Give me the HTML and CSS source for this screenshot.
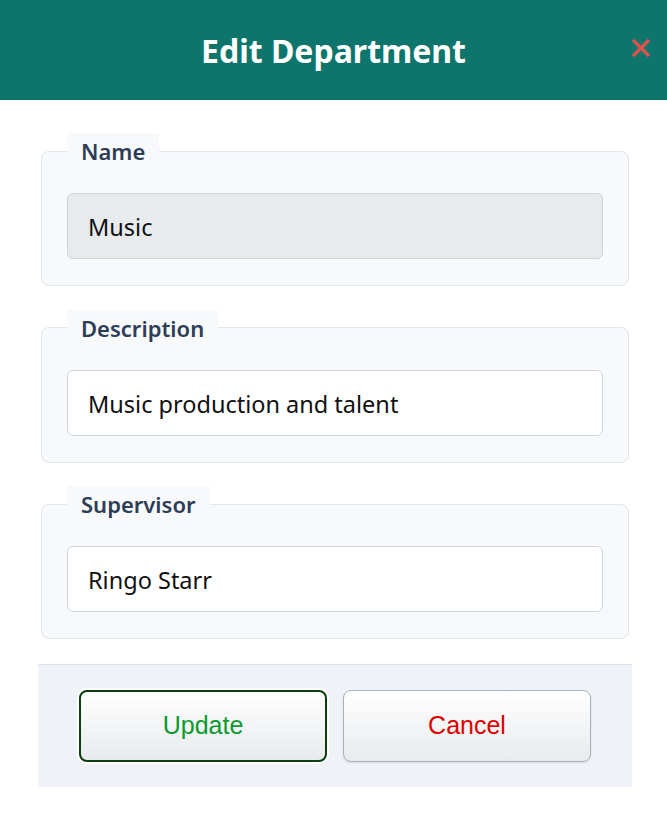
FILE: index.html
```html
<!DOCTYPE html>
<html lang="en">
<head>
<meta charset="utf-8">
<title>Edit Department</title>
<link rel="stylesheet" href="styles.css">
</head>
<body>
<div class="modal">
  <header class="modal-header">
    <h1 class="modal-title">Edit Department</h1>
    <button class="close-btn" type="button" aria-label="Close">
      <svg width="20" height="20" viewBox="0 0 20 20"><path d="M2 2 L18 18 M18 2 L2 18" stroke="#d9534f" stroke-width="3.4" stroke-linecap="butt"/></svg>
    </button>
  </header>
  <form class="modal-body">
    <fieldset class="group">
      <legend class="group-label">Name</legend>
      <input class="field field-disabled" type="text" value="Music" disabled>
    </fieldset>
    <fieldset class="group">
      <legend class="group-label">Description</legend>
      <input class="field" type="text" value="Music production and talent">
    </fieldset>
    <fieldset class="group">
      <legend class="group-label">Supervisor</legend>
      <input class="field" type="text" value="Ringo Starr">
    </fieldset>
  </form>
  <footer class="modal-footer">
    <button class="btn btn-update" type="button">Update</button>
    <button class="btn btn-cancel" type="button">Cancel</button>
  </footer>
</div>
</body>
</html>
```
FILE: styles.css
```css
* { box-sizing: border-box; }
html, body { margin: 0; padding: 0; background: #ffffff; }
body { font-family: "Noto Sans", "Open Sans", sans-serif; }

.modal { width: 667px; min-height: 816px; background: #fff; }

.modal-header {
  position: relative;
  height: 100px;
  background: #0e756d;
  display: flex;
  align-items: center;
  justify-content: center;
}
.modal-title {
  margin: 0;
  color: #ffffff;
  font-size: 32px;
  font-weight: 700;
  line-height: 1;
  padding-top: 1px;
}
.close-btn {
  position: absolute;
  right: 15px;
  top: 37px;
  width: 22px;
  height: 22px;
  padding: 0;
  border: 0;
  background: transparent;
  display: flex;
  align-items: center;
  justify-content: center;
}

.modal-body {
  padding: 33px 38px 0 41px;
  display: flex;
  flex-direction: column;
  gap: 23.5px;
}
.group {
  margin: 0;
  width: 588px;
  border: 1px solid #e2e6ee;
  border-radius: 8px;
  background: #f8f9fb;
  padding: 24px 25px 26px 25px;
}
.group-label {
  background: #f8f9fb;
  color: #2d3e56;
  font-size: 22px;
  font-weight: 600;
  line-height: 24px;
  padding: 6px 14px;
  margin-left: 0;
}
.field {
  display: block;
  width: 536px;
  height: 66px;
  border: 1px solid #cdd4de;
  border-radius: 6px;
  background: #ffffff;
  padding: 2px 20px 0 20px;
  font-family: "Noto Sans", "Open Sans", sans-serif;
  font-size: 23.5px;
  color: #111111;
}
.field-disabled { background: #e8ebee; color: #111111; -webkit-text-fill-color: #111111; opacity: 1; }

.modal-footer {
  margin: 25px 35px 0 38px;
  width: 594px;
  height: 123px;
  background: #eff3f8;
  border-top: 1px solid #dde3ec;
  display: flex;
  justify-content: center;
  align-items: center;
  gap: 16px;
  padding-bottom: 1px;
}
.btn {
  width: 248px;
  height: 72px;
  border-radius: 8px;
  background: linear-gradient(#ffffff, #e8eaed);
  font-family: "Liberation Sans", Arial, sans-serif;
  font-size: 25px;
  box-shadow: 0 1px 2px rgba(0,0,0,0.12);
}
.btn-update {
  border: 2px solid #0b3f0e;
  color: #0a9a2e;
  box-shadow: 0 0 0 2px #ffffff, 0 1px 2px rgba(0,0,0,0.12);
}
.btn-cancel {
  border: 1px solid #a9b1ba;
  color: #dd0000;
}
```
